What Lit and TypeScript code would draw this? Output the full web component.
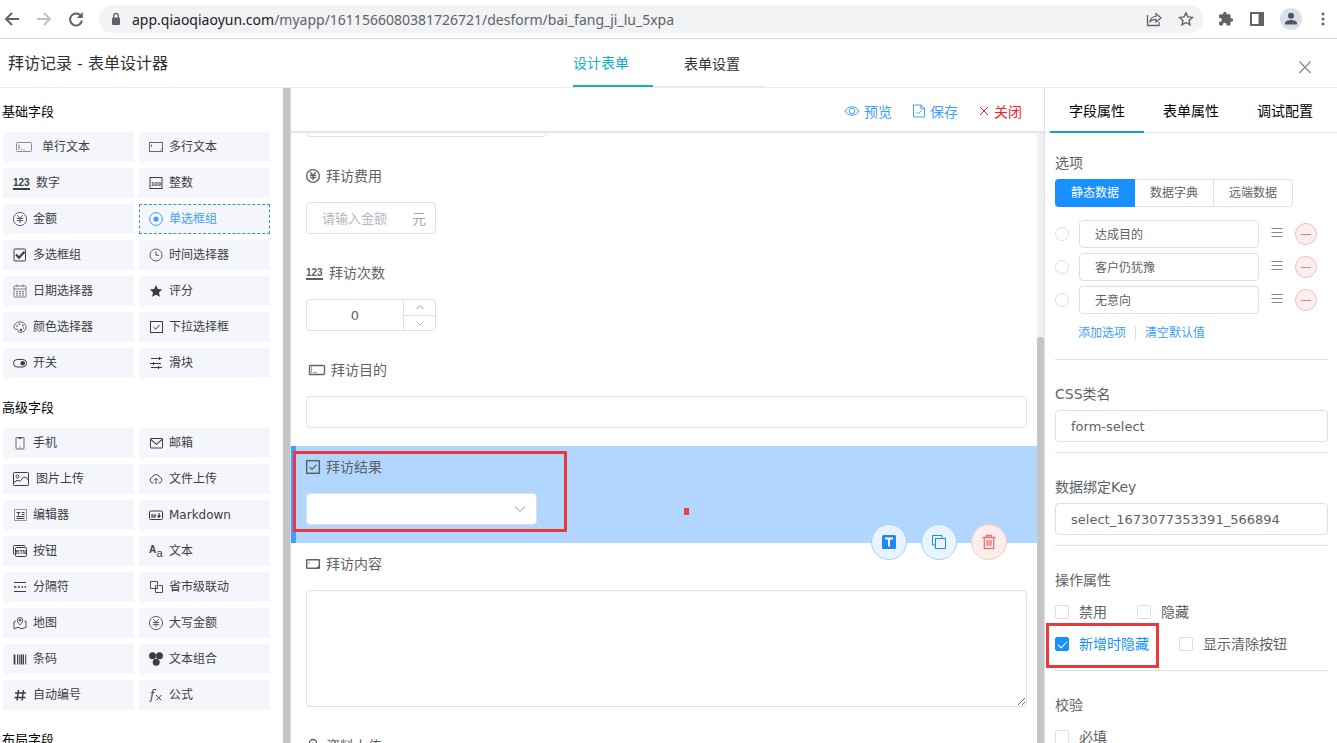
import { LitElement, html, svg, css, SVGTemplateResult } from "lit";
import { customElement, property, state } from "lit/decorators.js";
import { classMap } from "lit/directives/class-map.js";

interface Glyph {
  w: number;
  body: SVGTemplateResult;
}

const numerals = "'Liberation Sans', sans-serif";
const yuan = svg`<path d="M4.3 4.200 7 7.300l2.700-3.100M7 7.300v4.700M3.800 7.500h6.400M3.800 9.600h6.400"/>`;

const glyphs: Record<string, Glyph> = {
  line: { w: 23, body: svg`<rect x="3.5" y="3.5" width="15" height="9" rx="1" stroke="#8a8d94"/><path d="M6 5.5v5M8 10.5h1M10.5 10.5h1" stroke="#777"/>` },
  lineLabel: { w: 19, body: svg`<rect x="3.5" y="3.5" width="15" height="9" rx="1" stroke-width="1.4"/><path d="M5.5 5v6M7 10.5h4" stroke="#8fa3ad"/>` },
  area: { w: 14, body: svg`<rect x=".5" y="3.5" width="13" height="9" stroke="#66696f"/><path d="M2.5 5.5v2.5M11 11.5l1.5-1.5" stroke="#777"/>` },
  areaLabel: { w: 14, body: svg`<rect x=".7" y="3.7" width="12.6" height="8.6" rx=".5" stroke-width="1.5"/><path d="M3 6v2" stroke="#999"/><path d="M13 9.5v2.5h-3z" fill="currentColor" stroke="none"/>` },
  number: { w: 17, body: svg`<text x="0" y="11" font-family=${numerals} font-weight="700" font-size="10" fill="currentColor" stroke="none">123</text><path d="M0 14h17" stroke-width="2"/>` },
  integer: { w: 14, body: svg`<rect x="1" y="2.5" width="12" height="11"/><text x="7" y="10.5" text-anchor="middle" font-family=${numerals} font-weight="700" font-size="6" fill="currentColor" stroke="none">100</text>` },
  money: { w: 14, body: svg`<circle cx="7" cy="8" r="6.6" stroke-width=".8"/><g stroke-width=".8">${yuan}</g>` },
  moneyLabel: { w: 14, body: svg`<circle cx="7" cy="8" r="6.4" stroke-width="1.4"/><g stroke-width="1.3">${yuan}</g>` },
  radio: { w: 14, body: svg`<circle cx="7" cy="8" r="6.4"/><circle cx="7" cy="8" r="2.6" fill="currentColor" stroke="none"/>` },
  checks: { w: 14, body: svg`<rect x="1" y="2" width="11.5" height="12" rx="1"/><path d="m3 7.5 3 3.2 5.5-6" stroke-width="2.2"/>` },
  clock: { w: 14, body: svg`<circle cx="7" cy="8" r="6" stroke-width=".8"/><path d="M7 4.5V8.3h3" stroke-width=".9"/>` },
  calendar: { w: 14, body: svg`<g stroke-width=".8" stroke="#666"><rect x="1" y="3" width="12" height="11" rx=".5"/><path d="M1 6h12M4 1.5V4M10 1.5V4M3 8.5h2M6 8.5h2M9 8.5h2M3 10.3h2M6 10.3h2M9 10.3h2M3 12.1h2M6 12.1h2M9 12.1h2"/></g>` },
  star: { w: 14, body: svg`<path d="m7 2 1.9 3.9 4.3.5-3.2 3 .9 4.4L7 11.7l-3.9 2.1.9-4.4-3.2-3 4.3-.5z" fill="currentColor" stroke="none"/>` },
  palette: { w: 14, body: svg`<path d="M7 3C3.600 3 1 5 1 8c0 1.800 1 2.600 2.400 2.300 1.300-.3 2 .5 1.800 1.600-.2 1 .8 1.600 2 1.600 3.200 0 5.800-2.300 5.800-5.500C13 5 10.300 3 7 3z" stroke-width=".8"/><g fill="currentColor" stroke="none"><circle cx="4" cy="7" r=".8"/><circle cx="6.500" cy="5.200" r=".8"/><circle cx="9.800" cy="6.400" r=".8"/><circle cx="8" cy="11" r="1.200"/><circle cx="10.500" cy="9" r=".7"/></g>` },
  check: { w: 14, body: svg`<rect x="1.500" y="2.500" width="12" height="11"/><path d="m4.500 8 2.300 2.200L10.500 6"/>` },
  checkLabel: { w: 14, body: svg`<rect x=".7" y="1.700" width="12.600" height="12.600" stroke-width="1.500"/><path d="m3.600 8 2.500 2.400L10.600 5.600" stroke-width="1.300"/>` },
  toggle: { w: 14, body: svg`<rect x=".5" y="4.500" width="13" height="7.500" rx="3.700"/><circle cx="9.700" cy="8.200" r="2.300" fill="currentColor" stroke="none"/>` },
  slider: { w: 14, body: svg`<path d="M2 3.500h11M1 8.500h11M2 12.500h11"/><path d="M10.500 2v3M4.500 7v3M9.500 11v3"/>` },
  phone: { w: 14, body: svg`<rect x="3" y="2.500" width="8" height="11.500" rx=".8" stroke="#666"/><path d="M5.500 3.200h3" stroke-width="1.200"/><path d="M6.500 12h1"/>` },
  mail: { w: 14, body: svg`<rect x="1.500" y="3.500" width="12" height="9.500" rx=".5"/><path d="m1.800 4.300 5.700 5 5.700-5" stroke-width="1.100"/>` },
  image: { w: 17, body: svg`<rect x=".5" y="1.500" width="15" height="13" rx=".8"/><circle cx="4.500" cy="5.500" r="1.500"/><path d="m1 11.500 3-2.200 3 1 3.800-4.300 2.400.8L15.300 9"/>` },
  cloud: { w: 14, body: svg`<path d="M4.500 12H4a3 3 0 0 1-.6-5.900 3.800 3.800 0 0 1 7.200 0A3 3 0 0 1 10 12h-.5M7 13V7.500M5 9.300l2-2 2 2" stroke-width=".9"/>` },
  editor: { w: 14, body: svg`<rect x="1.500" y="2.500" width="12" height="11" stroke="#999"/><path d="M3.500 5.500h4M5.500 5.500v3M9 5.500h2.500M9 7.500h2.500M3.500 9.500h8M3.500 11.500h8"/>` },
  markdown: { w: 14, body: svg`<rect x=".5" y="4" width="13" height="8.500" rx="1"/><text x="2" y="10.500" font-family=${numerals} font-weight="700" font-size="6" fill="currentColor" stroke="none">M</text><path d="M10 6v4M8.500 8.700l1.500 1.600 1.500-1.600" stroke-width="1.200"/>` },
  button: { w: 14, body: svg`<path d="M1.500 11.500h-.3a.7.7 0 0 1-.7-.7V3.500a1 1 0 0 1 1-1h9.800a.7.700 0 0 1 .7.7v.5"/><rect x="2.500" y="4.500" width="11" height="9" rx="1"/><text x="8" y="11" text-anchor="middle" font-family=${numerals} font-weight="700" font-size="5" fill="currentColor" stroke="none">BTN</text>` },
  text: { w: 14, body: svg`<text x="0" y="10" font-family=${numerals} font-weight="700" font-size="10" fill="currentColor" stroke="none">A</text><text x="7.500" y="14" font-family=${numerals} font-size="11" fill="currentColor" stroke="none">a</text>` },
  divider: { w: 14, body: svg`<path d="M1 3.500h12M1 12.500h12" stroke-width="1.200"/><path d="M1 8h2.500M5 8h2M8.500 8h1.500M11.500 8H13" stroke-width="1.500"/>` },
  region: { w: 14, body: svg`<path d="M4 9.500H1.500v-7h7v3M9.500 6.500h4v7h-7v-7h1M8.500 5.500v4H4" stroke-width=".9"/>` },
  map: { w: 14, body: svg`<path d="M3 6 1 6.800v7l4-1.500 4 1.500 4-1.500V6l-1.500.5M4.300 5.200a2.700 2.700 0 0 1 5.400 0C9.700 7.500 7 10 7 10S4.300 7.500 4.300 5.200z" stroke-width=".9"/><circle cx="7" cy="5.200" r=".9"/>` },
  barcode: { w: 14, body: svg`<path d="M1.500 3.500v10M8.500 3.500v10" stroke-width="1.800"/><path d="M4.500 3.500v10M6.300 3.500v10M10.500 3.500v10M12.700 3.500v10"/>` },
  group: { w: 14, body: svg`<g fill="currentColor" stroke="none"><circle cx="3.500" cy="4.700" r="3.500"/><circle cx="10.500" cy="4.700" r="3.500"/><circle cx="7.200" cy="11.200" r="3.500"/></g>` },
  hash: { w: 14, body: svg`<path d="M5.500 3 4 13.500M10.500 3 9 13.500M2 6h11M1.500 10.500h11" stroke-width="1.500"/>` },
  formula: { w: 14, body: svg`<text x="1" y="12" font-family="DejaVu Serif, serif" font-style="italic" font-size="12" fill="currentColor" stroke="none">f</text><path d="m7 8 5.500 5.500M12.500 8 7 13.500"/>` },
  clip: { w: 14, body: svg`<circle cx="7" cy="5" r="3.500" stroke-width="1.300"/><path d="M7 8.500V14"/>` },
  eye: { w: 16, body: svg`<path d="M1 8c3-5.600 11-5.600 14 0-3 5.600-11 5.600-14 0z"/><circle cx="8" cy="8" r="2.800"/>` },
  save: { w: 14, body: svg`<path d="M1.500 2h7.500l3.500 3.500V14h-11zM8.800 2.200v3.500h3.500"/><path d="m4.500 9 1.800 1.800L9.700 7.500"/>` },
  close: { w: 12, body: svg`<path d="m2 4 8 8M10 4l-8 8"/>` },
  closeBig: { w: 16, body: svg`<path d="m2.500 2.500 11 11.500M13.500 2.500 2.500 14" stroke-width="1.300"/>` },
  back: { w: 16, body: svg`<path d="M15 8H2.200M8 2 2 8l6 6" stroke-width="1.900"/>` },
  forward: { w: 16, body: svg`<path d="M1 8h12.800M8 2l6 6-6 6" stroke-width="1.900"/>` },
  reload: { w: 16, body: svg`<path d="M13.300 5.500A6 6 0 1 0 14 9.500" stroke-width="2"/><path d="M14.800 1v6h-6z" fill="currentColor" stroke="none"/>` },
  lock: { w: 12, body: svg`<rect x="2" y="6.500" width="8" height="7.500" rx="1" fill="currentColor" stroke="none"/><path d="M3.700 7V4.600a2.300 2.300 0 0 1 4.600 0V7" stroke-width="1.300"/>` },
  share: { w: 16, body: svg`<path d="M1.500 4v10.500h11.500V11" stroke-width="1.300"/><path d="M4 10.500c.5-3.500 2.500-5 6-5V2.500l5 4.500-5 4V8.300c-2.500 0-4.300.5-6 2.200z" stroke-width="1.200"/>` },
  favorite: { w: 16, body: svg`<path d="m8 1.800 1.900 4.100 4.500.5L11 9.400l1 4.500-4-2.400-4 2.400 1-4.500L1.600 6.400l4.500-.5z" stroke-width="1.400"/>` },
  puzzle: { w: 16, body: svg`<path d="M13.500 7.300h-1V4.600c0-.8-.6-1.300-1.300-1.300H8.500V2.400a1.700 1.700 0 0 0-3.400 0v.9H2.400c-.7 0-1.300.5-1.300 1.300v2.500H2a1.800 1.800 0 0 1 0 3.600h-.9v2.500c0 .8.600 1.300 1.300 1.300h2.500v-.9a1.800 1.800 0 0 1 3.600 0v.9h2.700c.7 0 1.300-.5 1.300-1.300v-2.500h1a1.700 1.700 0 0 0 0-3.400z" fill="currentColor" stroke="none"/>` },
  sidebar: { w: 16, body: svg`<rect x="2" y="2" width="12" height="12" stroke-width="2"/><path d="M9.500 2H14v12H9.500z" fill="currentColor" stroke="none"/>` },
  dots: { w: 16, body: svg`<g fill="currentColor" stroke="none"><circle cx="8" cy="3" r="1.500"/><circle cx="8" cy="8" r="1.500"/><circle cx="8" cy="13" r="1.500"/></g>` },
  person: { w: 16, body: svg`<g fill="currentColor" stroke="none"><circle cx="8" cy="4.800" r="3"/><path d="M2 13.500v-1.500c0-2 3.500-3 6-3s6 1 6 3v1.500z"/></g>` },
  typeBox: { w: 14, body: svg`<rect x="0" y="1" width="14" height="14" rx="1.500" fill="currentColor" stroke="none"/><path d="M3 4.500h8M7 4.500V12.500" stroke="#fff" stroke-width="2"/>` },
  copy: { w: 14, body: svg`<path d="M3.500 11H.500V1.500H10V4"/><rect x="3.500" y="4.500" width="10" height="10"/>` },
  trash: { w: 14, body: svg`<path d="M.5 3.500h13M4.500 3.500v-2h5v2M2.300 3.500v11h9.400v-11M5 6v6M7 6v6M9 6v6" stroke-width="1.300"/>` },
  minus: { w: 12, body: svg`<path d="M1 8.500h10"/>` },
  drag: { w: 12, body: svg`<path d="M.5 2.500h11M.5 6.500h11M.5 10.500h11" stroke-width="1.200"/>` },
  up: { w: 10, body: svg`<path d="m1.500 10 3.500-3.500L8.500 10"/>` },
  down: { w: 10, body: svg`<path d="m1.500 6.500 3.500 3.500L8.500 6.500"/>` },
  downBig: { w: 12, body: svg`<path d="m1 5.500 5 5 5-5" stroke-width="1.100"/>` },
};

const icon = (name: string) => {
  const g = glyphs[name];
  return html`<svg class="icon" width=${g.w} height="16" viewBox="0 0 ${g.w} 16" fill="none" stroke="currentColor" aria-hidden="true">${g.body}</svg>`;
};

const base = css`
  * { box-sizing: border-box; }
  button, input, select, textarea { font: inherit; color: inherit; margin: 0; padding: 0; }
  button { background: none; border: 0; cursor: pointer; }
  input, select, textarea { background: #fff; border: 1px solid #dcdfe6; border-radius: 4px; outline: 0; }
  a { text-decoration: none; color: inherit; }
  h2 { margin: 0; font-weight: 400; }
  .icon { flex: none; display: block; overflow: visible; }
`;

@customElement("browser-bar")
class BrowserBar extends LitElement {
  static styles = [base, css`
    :host { display: flex; align-items: center; height: 39px; padding: 0 6px 0 4px; gap: 15px; background: #fff; border-bottom: 1px solid #d5d6d8; color: #5f6368; font-family: "Noto Sans", sans-serif; font-size: 14px; }
    .muted { color: #bfc1c4; }
    .address { flex: 1; display: flex; align-items: center; height: 28px; padding: 0 9px 0 11px; border-radius: 14px; background: #f1f3f4; gap: 16px; }
    .nav { display: flex; gap: 16px; }
    .url { flex: 1; display: flex; align-items: center; gap: 10px; white-space: nowrap; }
    .host { color: #202124; }
    .avatar { display: flex; align-items: center; justify-content: center; width: 22px; height: 22px; border-radius: 50%; background: #dadfe8; color: #4d5566; }
    .tools { display: flex; align-items: center; gap: 15px; }
    .avatar + button { margin-left: -2px; }
  `];
  render() {
    return html`
      <div class="nav">
        <button aria-label="后退">${icon("back")}</button>
        <button class="muted" aria-label="前进">${icon("forward")}</button>
        <button aria-label="刷新">${icon("reload")}</button>
      </div>
      <div class="address">
        <div class="url">${icon("lock")}<span><span class="host">app.qiaoqiaoyun.com</span>/myapp/1611566080381726721/desform/bai_fang_ji_lu_5xpa</span></div>
        <button aria-label="分享">${icon("share")}</button>
        <button aria-label="收藏">${icon("favorite")}</button>
      </div>
      <div class="tools">
        <button aria-label="扩展">${icon("puzzle")}</button>
        <button aria-label="侧边栏">${icon("sidebar")}</button>
        <button class="avatar" aria-label="用户">${icon("person")}</button>
        <button aria-label="菜单">${icon("dots")}</button>
      </div>`;
  }
}

const groups = [
  { title: "基础字段", items: [
    ["line", "单行文本"], ["area", "多行文本"], ["number", "数字"], ["integer", "整数"],
    ["money", "金额"], ["radio", "单选框组"], ["checks", "多选框组"], ["clock", "时间选择器"],
    ["calendar", "日期选择器"], ["star", "评分"], ["palette", "颜色选择器"], ["check", "下拉选择框"],
    ["toggle", "开关"], ["slider", "滑块"],
  ] },
  { title: "高级字段", items: [
    ["phone", "手机"], ["mail", "邮箱"], ["image", "图片上传"], ["cloud", "文件上传"],
    ["editor", "编辑器"], ["markdown", "Markdown"], ["button", "按钮"], ["text", "文本"],
    ["divider", "分隔符"], ["region", "省市级联动"], ["map", "地图"], ["money", "大写金额"],
    ["barcode", "条码"], ["group", "文本组合"], ["hash", "自动编号"], ["formula", "公式"],
  ] },
  { title: "布局字段", items: [] },
];

@customElement("field-palette")
class FieldPalette extends LitElement {
  @state() private active = "单选框组";
  static styles = [base, css`
    :host { display: flex; min-height: 0; overflow: hidden; }
    .list { flex: 1; display: flex; flex-direction: column; gap: 20px; padding: 14px 13px 0 2px; }
    .title { font-size: 13px; line-height: 20px; color: #000; margin-bottom: 10px; }
    .grid { display: grid; grid-template-columns: 1fr 1fr; gap: 6px 5px; padding-left: 1px; }
    .card { display: flex; align-items: center; gap: 6px; height: 30px; padding: 0 9px; border: 1px solid #f4f6fc; background: #f4f6fc; color: #3c3e42; font-size: 12px; line-height: 16px; text-align: left; white-space: nowrap; }
    .card span { padding-bottom: 1px; }
    .card.active { border: 1px dashed #2f97cc; color: #409eff; }
    .bar { width: 7px; background: #c5c5c5; }
  `];
  render() {
    return html`
      <div class="list">${groups.map((g) => html`
        <section>
          <h2 class="title">${g.title}</h2>
          <div class="grid">${g.items.map(([i, t]) => html`
            <button class=${classMap({ card: true, active: t === this.active })} @click=${() => (this.active = t)}>${icon(i)}<span>${t}</span></button>`)}
          </div>
        </section>`)}
      </div>
      <div class="bar"></div>`;
  }
}

@customElement("form-canvas")
class FormCanvas extends LitElement {
  static styles = [base, css`
    :host { display: flex; flex-direction: column; min-width: 0; min-height: 0; border-left: 1px solid #d9dadc; border-right: 1px solid #dcdfe6; font-size: 13px; color: #606266; }
    .toolbar { flex: none; display: flex; justify-content: flex-end; align-items: center; gap: 20px; height: 45px; padding: 2px 22px 0 0; border-bottom: 2px solid #e2e5ea; font-size: 14px; color: #409eff; }
    .tool { display: flex; align-items: center; gap: 4px; }
    .tool.danger { color: #f5222d; }
    .view { flex: 1; display: flex; min-height: 0; overflow: hidden; }
    .items { flex: 1; min-width: 0; }
    .item { position: relative; padding: 11px 10px 18px 15px; }
    .item.scrolled { margin-top: -75px; }
    .item.active { background: #b1d6ff; box-shadow: inset 5px 0 #409eff; }
    .label { display: flex; align-items: center; gap: 6px; width: fit-content; font-size: 14px; line-height: 20px; margin-bottom: 16px; }
    .input { display: block; width: 100%; height: 32px; padding: 0 15px; }
    .medium { width: 241px; }
    .box { display: flex; align-items: center; width: 130px; height: 32px; border: 1px solid #dcdfe6; border-radius: 4px; overflow: hidden; }
    .bare { flex: 1; min-width: 0; height: 30px; padding: 0 0 0 15px; border: 0; }
    .bare::placeholder { color: #b4b8bf; }
    .unit { padding: 0 9px; font-size: 14px; color: #a4a8af; }
    .count { padding: 0; text-align: center; }
    .steps { display: flex; flex-direction: column; width: 32px; height: 30px; border-left: 1px solid #dcdfe6; color: #909399; }
    .step { flex: 1; min-height: 0; display: flex; align-items: center; justify-content: center; overflow: hidden; }
    .step + .step { border-top: 1px solid #dcdfe6; color: #b8bbc2; }
    .picker { position: relative; width: 231px; color: #b4b8bf; }
    .picker select { display: block; width: 100%; height: 32px; appearance: none; padding: 0 15px; }
    .picker .icon { position: absolute; right: 11px; top: 8px; pointer-events: none; }
    .area { display: block; width: 100%; height: 117px; padding: 5px 15px; resize: vertical; }
    .actions { position: absolute; z-index: 1; right: 30px; bottom: -17px; display: flex; gap: 14px; }
    .round { display: flex; align-items: center; justify-content: center; width: 36px; height: 36px; border: 1px solid #a3d0fd; border-radius: 50%; background: #e8f4ff; color: #1e88f5; }
    .round.danger { border-color: #fbc4c4; background: #fdeeee; color: #e57373; }
    .frame { position: absolute; left: 2px; top: 5px; width: 274px; height: 81px; border: 3px solid #e8393c; pointer-events: none; }
    .dot { position: absolute; left: 393px; top: 62px; width: 5px; height: 7px; background: #f03c3c; }
    .track { width: 7px; background: #f1f1f1; padding-top: 204px; display: flex; }
    .thumb { flex: 1; background: #c5c5c5; border-radius: 3px 3px 0 0; }
  `];
  private label(i: string, t: string, id: string) {
    return html`<label class="label" for=${id}>${icon(i)}<span>${t}</span></label>`;
  }
  render() {
    return html`
      <div class="toolbar">
        <button class="tool">${icon("eye")}预览</button>
        <button class="tool">${icon("save")}保存</button>
        <button class="tool danger">${icon("close")}关闭</button>
      </div>
      <div class="view">
        <div class="items">
          <div class="item scrolled"><div class="label">&nbsp;</div><input class="input medium" aria-label="拜访时间" /></div>
          <div class="item">${this.label("moneyLabel", "拜访费用", "fee")}
            <div class="box"><input class="bare" id="fee" placeholder="请输入金额" /><span class="unit">元</span></div>
          </div>
          <div class="item">${this.label("number", "拜访次数", "count")}
            <div class="box"><input class="bare count" id="count" value="0" />
              <div class="steps"><button class="step" aria-label="增加">${icon("up")}</button><button class="step" aria-label="减少">${icon("down")}</button></div>
            </div>
          </div>
          <div class="item">${this.label("lineLabel", "拜访目的", "goal")}<input class="input" id="goal" /></div>
          <div class="item active">${this.label("checkLabel", "拜访结果", "result")}
            <div class="picker"><select id="result"><option></option></select>${icon("downBig")}</div>
            <div class="frame"></div>
            <div class="dot"></div>
            <div class="actions">
              <button class="round" aria-label="类型">${icon("typeBox")}</button>
              <button class="round" aria-label="复制">${icon("copy")}</button>
              <button class="round danger" aria-label="删除">${icon("trash")}</button>
            </div>
          </div>
          <div class="item">${this.label("areaLabel", "拜访内容", "content")}<textarea class="area" id="content"></textarea></div>
          <div class="item">${this.label("clip", "资料上传", "files")}</div>
        </div>
        <div class="track"><div class="thumb"></div></div>
      </div>`;
  }
}

@customElement("check-option")
class CheckOption extends LitElement {
  @property() text = "";
  @property({ type: Boolean }) checked = false;
  static styles = [base, css`
    :host { display: block; }
    .option { display: flex; align-items: center; gap: 10px; font-size: 14px; line-height: 20px; }
    .tick { position: relative; appearance: none; width: 14px; height: 14px; border-radius: 2px; }
    .tick:checked { background: #1890ff; border-color: #1890ff; }
    .tick:checked::after { content: ""; position: absolute; left: 4px; top: 1px; width: 4px; height: 8px; border: solid #fff; border-width: 0 1px 1px 0; transform: rotate(45deg); }
    .tick:checked + span { color: #1890ff; }
  `];
  render() {
    return html`<label class="option"><input class="tick" type="checkbox" .checked=${this.checked} /><span>${this.text}</span></label>`;
  }
}

@customElement("property-panel")
class PropertyPanel extends LitElement {
  @state() private tab = 0;
  @state() private source = 0;
  static styles = [base, css`
    :host { display: flex; flex-direction: column; min-height: 0; overflow: hidden; color: #606266; font-size: 13px; }
    .tabs { flex: none; display: flex; height: 45px; padding-left: 5px; border-bottom: 1px solid #e4e7ed; }
    .tab { flex: none; width: 94px; height: 45px; font-size: 14px; color: #000; border-bottom: 2px solid transparent; }
    .tab.active { border-color: #12a0c9; }
    .body { padding: 20px 9px 0 10px; }
    .title { display: block; font-size: 14px; line-height: 20px; margin-bottom: 6px; }
    .segments { display: flex; width: fit-content; height: 28px; border: 1px solid #dcdfe6; border-radius: 4px; font-size: 12px; line-height: 24px; margin-bottom: 13px; }
    .segment { width: 79px; height: 26px; padding-bottom: 1px; border-right: 1px solid #dcdfe6; }
    .segment:last-child { width: 78px; border: 0; }
    .segment.active { height: 28px; margin: -1px 0 0 -1px; width: 80px; border: 0; background: #1890ff; color: #fff; border-radius: 4px 0 0 4px; }
    .options { display: grid; grid-template-columns: minmax(0, 1fr); gap: 5px; font-size: 12px; }
    .row { display: flex; align-items: center; height: 28px; }
    .pick { appearance: none; flex: none; width: 14px; height: 14px; border-radius: 50%; margin-right: 10px; }
    .value { flex: 1; min-width: 0; height: 28px; padding: 0 15px 2px; }
    .grip { flex: none; display: flex; margin: 0 12px; color: #85888e; }
    .remove { flex: none; display: flex; align-items: center; justify-content: center; width: 22px; height: 22px; border: 1px solid #f5bcc0; border-radius: 50%; background: #fdeeee; color: #df8088; margin-right: 11px; }
    .links { display: flex; align-items: center; padding: 9px 0 6px 23px; line-height: 20px; font-size: 12px; color: #409eff; }
    .links a + a { margin-left: 9px; padding-left: 9px; border-left: 1px solid #dcdfe6; line-height: 14px; }
    .section { border-top: 1px solid #dcdfe6; margin-top: 10px; padding-top: 24px; }
    .input { display: block; width: 100%; height: 32px; padding: 0 15px; }
    .frameable { position: relative; }
    .checks { display: flex; align-items: center; gap: 30px; height: 32px; }
    .frame { position: absolute; left: -9px; top: 77px; width: 113px; height: 45px; border: 3px solid #e8393c; pointer-events: none; }
  `];
  render() {
    return html`
      <div class="tabs" role="tablist">${["字段属性", "表单属性", "调试配置"].map((t, i) => html`
        <button role="tab" class=${classMap({ tab: true, active: i === this.tab })} @click=${() => (this.tab = i)}>${t}</button>`)}
      </div>
      <div class="body">
        <h2 class="title">选项</h2>
        <div class="segments">${["静态数据", "数据字典", "远端数据"].map((t, i) => html`
          <button class=${classMap({ segment: true, active: i === this.source })} @click=${() => (this.source = i)}>${t}</button>`)}
        </div>
        <div class="options">${["达成目的", "客户仍犹豫", "无意向"].map((t) => html`
          <div class="row">
            <input class="pick" type="radio" name="default" aria-label=${t} />
            <input class="value" .value=${t} aria-label="选项" />
            <button class="grip" aria-label="排序">${icon("drag")}</button>
            <button class="remove" aria-label="移除">${icon("minus")}</button>
          </div>`)}
        </div>
        <div class="links"><a href="#add">添加选项</a><a href="#clear">清空默认值</a></div>
        <div class="section"><label class="title" for="cls">CSS类名</label><input class="input" id="cls" value="form-select" /></div>
        <div class="section"><label class="title" for="key">数据绑定Key</label><input class="input" id="key" value="select_1673077353391_566894" /></div>
        <div class="section frameable">
          <h2 class="title">操作属性</h2>
          <div class="checks"><check-option text="禁用"></check-option><check-option text="隐藏"></check-option></div>
          <div class="checks"><check-option text="新增时隐藏" checked></check-option><check-option text="显示清除按钮"></check-option></div>
          <div class="frame"></div>
        </div>
        <div class="section">
          <h2 class="title">校验</h2>
          <div class="checks"><check-option text="必填"></check-option></div>
        </div>
      </div>`;
  }
}

@customElement("app-root")
class AppRoot extends LitElement {
  @state() private tab = 0;
  static styles = [base, css`
    :host { display: flex; flex-direction: column; height: 100vh; overflow: hidden; background: #fff; font-family: "DejaVu Sans", "Noto Sans CJK SC", sans-serif; }
    browser-bar { flex: none; }
    .header { flex: none; display: grid; grid-template-columns: 1fr auto 1fr; height: 49px; padding: 0 8px; border-bottom: 1px solid #ebedf0; }
    .name { font-size: 16px; line-height: 50px; color: #303133; }
    .tabs { display: flex; font-size: 14px; }
    .tab { height: 48px; padding: 0 24px 0 0; border-bottom: 2px solid transparent; color: #303133; }
    .tab + .tab { padding-left: 31px; border-bottom: 1px solid #e4e7ed; }
    .tab.active { color: #12b0c6; border-bottom: 2px solid #12b0c6; }
    .close { justify-self: end; color: #8c8c8c; padding: 6px 16px 0 0; }
    .main { flex: 1; min-height: 0; display: grid; grid-template-columns: 290px minmax(0, 1fr) 292px; grid-template-rows: minmax(0, 1fr); }
  `];
  render() {
    return html`
      <browser-bar></browser-bar>
      <header class="header">
        <span class="name">拜访记录 - 表单设计器</span>
        <nav class="tabs">${["设计表单", "表单设置"].map((t, i) => html`
          <button class=${classMap({ tab: true, active: i === this.tab })} @click=${() => (this.tab = i)}>${t}</button>`)}
        </nav>
        <button class="close" aria-label="关闭">${icon("closeBig")}</button>
      </header>
      <main class="main">
        <field-palette></field-palette>
        <form-canvas></form-canvas>
        <property-panel></property-panel>
      </main>`;
  }
}
